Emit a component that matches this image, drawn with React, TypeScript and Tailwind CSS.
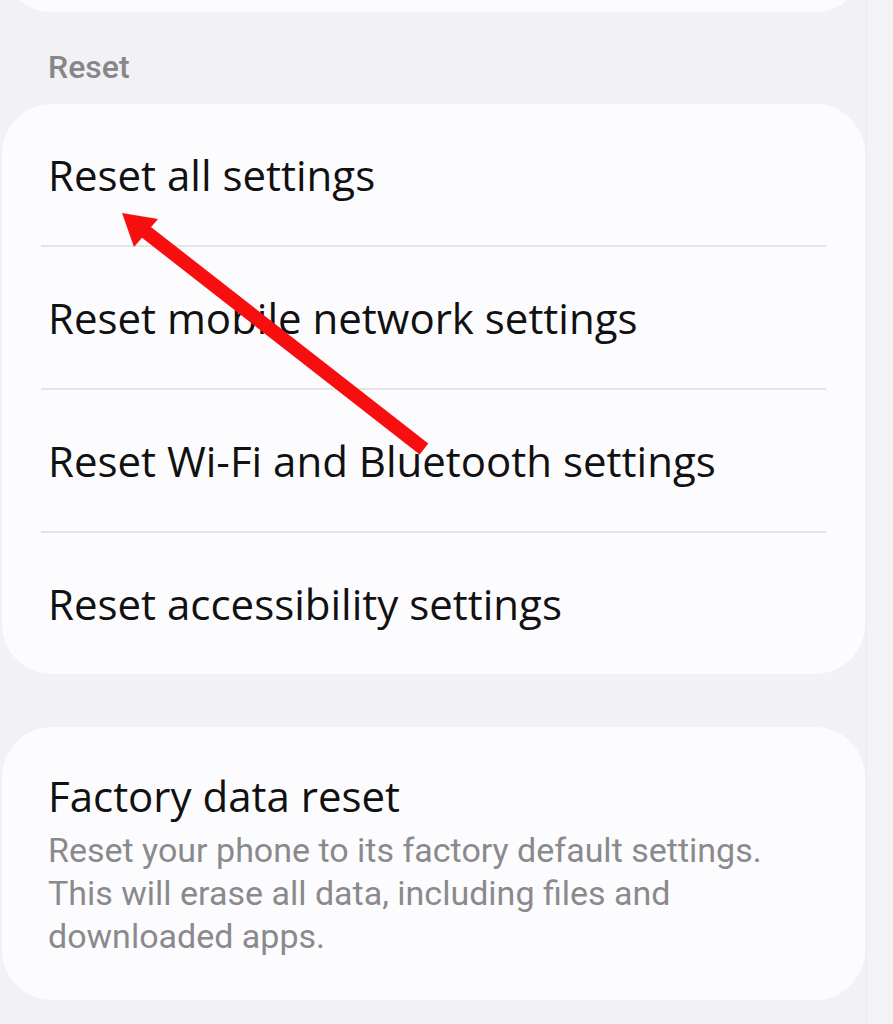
import React from 'react';

const rows = [
    'Reset all settings',
    'Reset mobile network settings',
    'Reset Wi-Fi and Bluetooth settings',
    'Reset accessibility settings',
];

const titleFont = { fontFamily: '"Open Sans", "Noto Sans", sans-serif' };
const subFont = { fontFamily: 'Roboto, "Liberation Sans", sans-serif' };

const App: React.FC = () => {
    return (
        <div className="relative w-[893px] h-[1024px] overflow-hidden bg-[#f2f2f4] flex">
            <div className="flex-1 flex flex-col pl-[2px] pr-[1px]">
                {/* bottom of the previous card */}
                <div className="h-[60px] -mt-[48px] bg-[#fcfcfe] rounded-b-[50px]"></div>

                <div className="h-[92px] flex items-center pl-[46px] pt-[18px]">
                    <span className="text-[32px] font-medium text-[#878789]" style={subFont}>Reset</span>
                </div>

                <div className="bg-[#fcfcfe] rounded-[50px] flex flex-col">
                    {rows.map((label, i) => (
                        <div key={label}>
                            {i > 0 && <div className="h-[2px] mx-[39px] bg-[#e4e4e6]"></div>}
                            <div className="h-[141px] flex items-center pl-[46px]">
                                <span className="text-[42px] text-[#111]" style={titleFont}>{label}</span>
                            </div>
                        </div>
                    ))}
                </div>

                <div className="mt-[53px] h-[273px] bg-[#fcfcfe] rounded-[50px] pl-[46px] pr-[90px] pt-[41px]">
                    <p className="text-[42px] leading-[56px] text-[#111]" style={titleFont}>Factory data reset</p>
                    <p className="mt-[5px] text-[34px] leading-[43px] text-[#8a8a8c]" style={subFont}>
                        Reset your phone to its factory default settings. This will erase all data, including files and downloaded apps.
                    </p>
                </div>
            </div>

            {/* scroll strip */}
            <div className="w-[27px] bg-[#f3f3f5] border-l border-[#ececee]"></div>

            {/* red annotation arrow */}
            <svg className="absolute inset-0 pointer-events-none" width="893" height="1024" viewBox="0 0 893 1024">
                <line x1="424" y1="449" x2="146" y2="232" stroke="#f70f10" strokeWidth="14" strokeLinecap="butt" />
                <polygon points="122,213 158,219 134,247" fill="#f70f10" />
            </svg>
        </div>
    );
};

export default App;
